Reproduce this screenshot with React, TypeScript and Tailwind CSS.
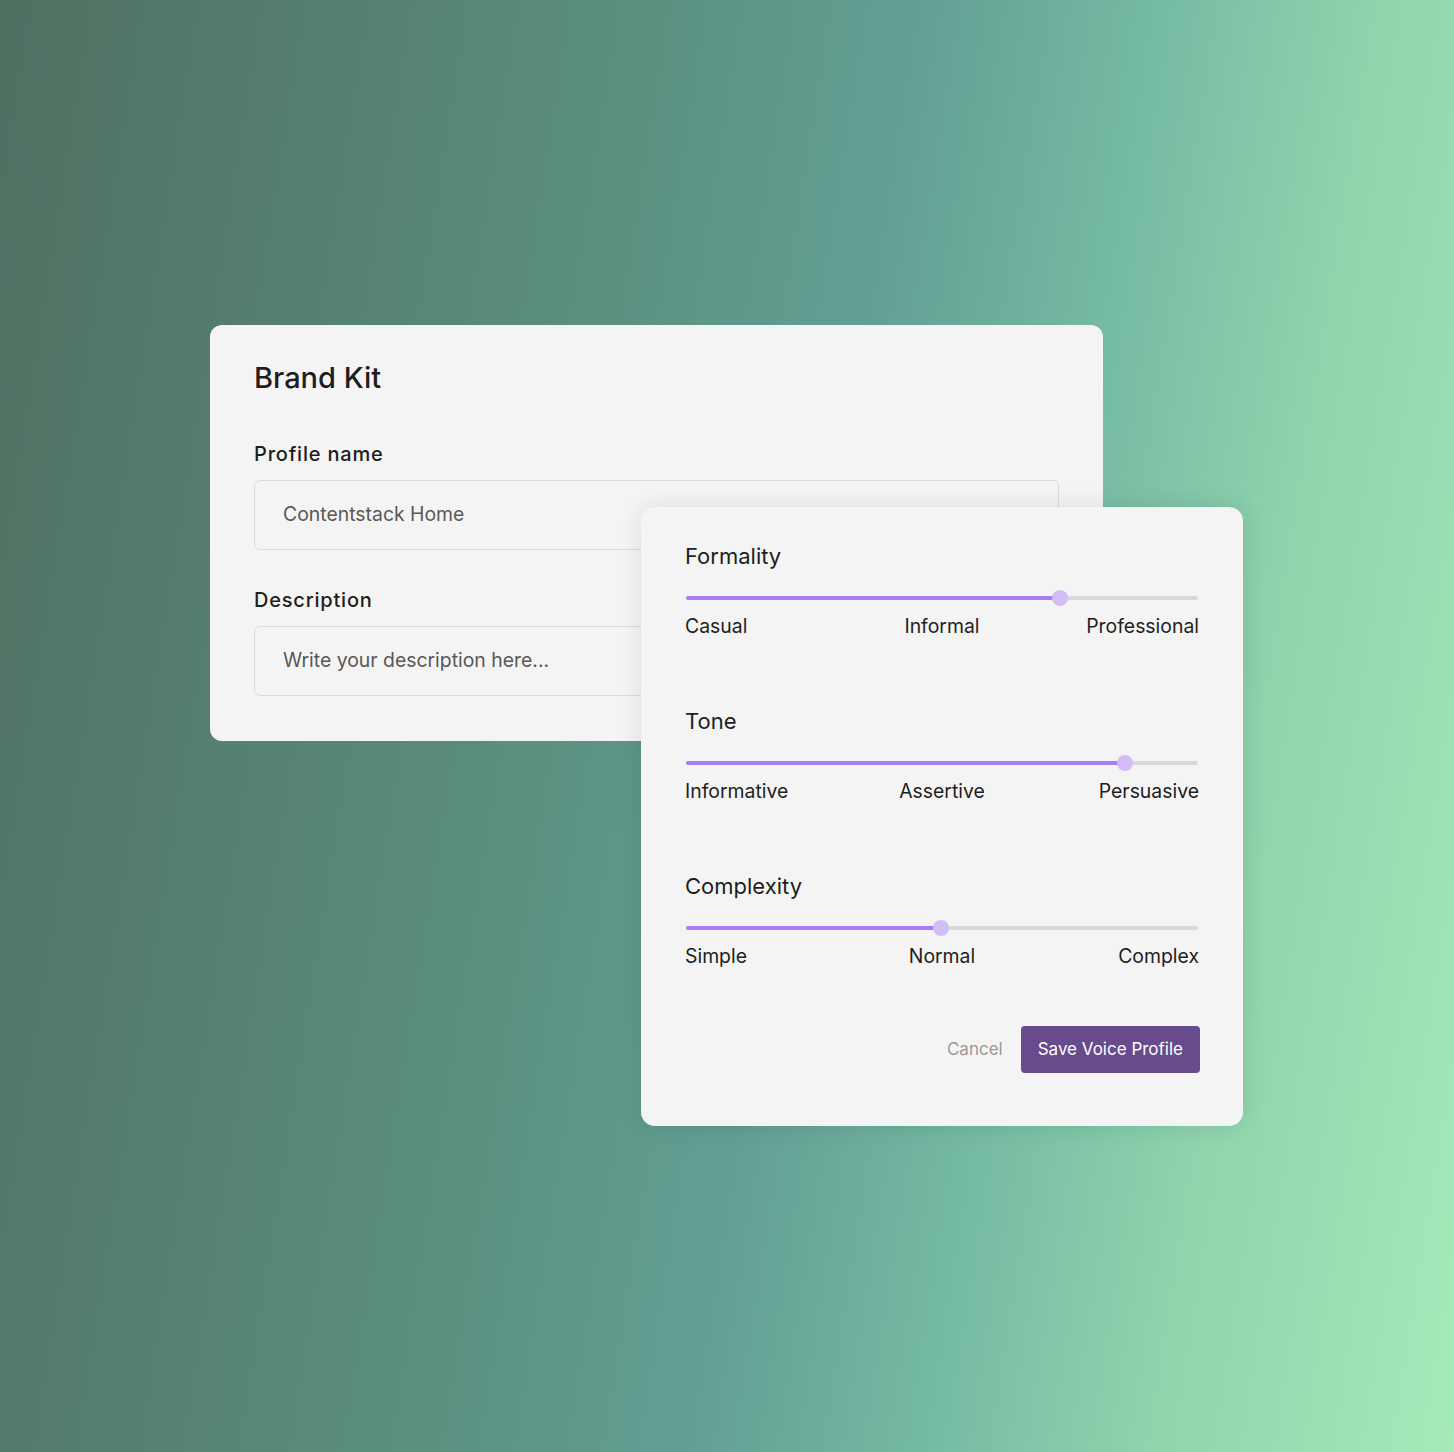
import React from "react";

function Slider({ title, labels, value }: { title: string; labels: [string, string, string]; value: number }) {
  return (
    <div>
      <div className="text-[22px] leading-[28px] text-[#1e1e1e]">{title}</div>
      <div className="relative mt-[20px] h-[16px] mx-px">
        <div className="absolute left-0 right-0 top-[6px] h-[4px] rounded-full bg-[#d9d9d9]" />
        <div className="absolute left-0 top-[6px] h-[4px] rounded-full bg-[#a97cf1]" style={{ width: `${value}%` }} />
        <div
          className="absolute top-0 h-[16px] w-[16px] -ml-[8px] rounded-full bg-[#d3bcf7]"
          style={{ left: `${value}%` }}
        />
      </div>
      <div className="mt-[7px] grid grid-cols-3 text-[19.4px] leading-[26px] text-[#1e1e1e]">
        <span className="text-left">{labels[0]}</span>
        <span className="text-center">{labels[1]}</span>
        <span className="text-right">{labels[2]}</span>
      </div>
    </div>
  );
}

export default function App() {
  return (
    <div
      className="relative min-h-[1452px] w-full overflow-hidden bg-[linear-gradient(99deg,#4f6f61_0%,#5a8c7c_35%,#62a094_55%,#74b9a3_68%,#8ed4ad_82%,#a5eab8_100%)] pt-[325px] pl-[210px]"
      style={{ fontFamily: "Inter, 'Noto Sans', sans-serif" }}
    >
      <div className="w-[893px] rounded-[12px] bg-[#f4f4f4] px-[44px] pt-[35px] pb-[45px]">
        <h1 className="text-[29px] font-medium leading-[36px] text-[#1e1e1e]">Brand Kit</h1>
        <div className="mt-[44px] text-[20px] font-medium leading-[28px] tracking-[0.8px] text-[#1e1e1e]">Profile name</div>
        <div className="mt-[12px] flex h-[70px] items-center rounded-[6px] border border-[#dcdcdc] px-[28px] text-[19.4px] text-[#585858]">
          Contentstack Home
        </div>
        <div className="mt-[36px] text-[20px] font-medium leading-[28px] tracking-[0.8px] text-[#1e1e1e]">Description</div>
        <div className="mt-[12px] flex h-[70px] items-center rounded-[6px] border border-[#dcdcdc] px-[28px] text-[19.4px] text-[#585858]">
          Write your description here...
        </div>
      </div>

      <div className="absolute left-[641px] top-[507px] w-[602px] rounded-[14px] bg-[#f4f4f4] pl-[44px] pr-[43px] pt-[35px] pb-[53px] shadow-[0_0_24px_rgba(0,0,0,0.10)]">
        <div className="mr-px flex flex-col gap-[68px]">
          <Slider title="Formality" labels={["Casual", "Informal", "Professional"]} value={73} />
          <Slider title="Tone" labels={["Informative", "Assertive", "Persuasive"]} value={85.8} />
          <Slider title="Complexity" labels={["Simple", "Normal", "Complex"]} value={49.8} />
        </div>
        <div className="mt-[57px] flex items-center justify-end gap-[18px]">
          <button className="text-[17px] text-[#9a9a9a]">Cancel</button>
          <button className="h-[47px] rounded-[4px] bg-[#674b8c] px-[17px] text-[17px] text-white">
            Save Voice Profile
          </button>
        </div>
      </div>
    </div>
  );
}
